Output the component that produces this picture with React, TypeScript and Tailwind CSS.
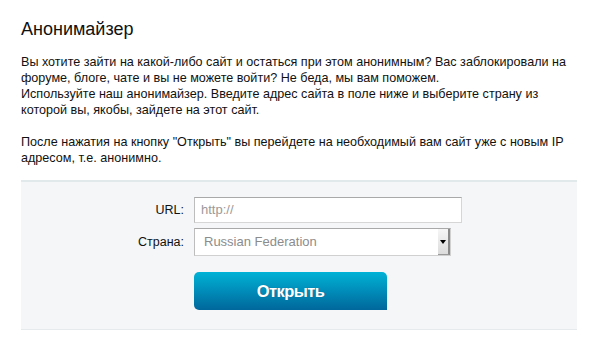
import React from "react";

export default function App() {
  return (
    <div className="w-[600px] h-[357px] bg-white text-[#111] font-['Liberation_Sans',Arial,sans-serif] overflow-hidden">
      <div className="px-[21px] pt-[18px]">
        <h1 className="text-[18px] leading-[22px] font-normal">Анонимайзер</h1>
        <p className="mt-[14px] text-[12.6px] leading-[16px] whitespace-nowrap">
          Вы хотите зайти на какой-либо сайт и остаться при этом анонимным? Вас заблокировали на
          <br />
          форуме, блоге, чате и вы не можете войти? Не беда, мы вам поможем.
          <br />
          Используйте наш анонимайзер. Введите адрес сайта в поле ниже и выберите страну из
          <br />
          которой вы, якобы, зайдете на этот сайт.
          <br />
          <br />
          После нажатия на кнопку "Открыть" вы перейдете на необходимый вам сайт уже с новым IP
          <br />
          адресом, т.е. анонимно.
        </p>
      </div>
      <div className="mx-[21px] mt-[14px] w-[556px] h-[150px] bg-[#f4f6f8] border-t-2 border-t-[#e1e9eb] border-b border-b-[#e6eaec] pt-[15px]">
        <div className="grid grid-cols-[163px_auto] gap-x-[10px] items-center">
          <label className="text-right text-[12.5px] leading-[16px]">URL:</label>
          <div className="w-[268px] h-[26px] bg-white border border-[#d6d6d6] border-t-[#a9a9a9] border-l-[#bdbdbd] flex items-center pl-[6px] text-[13px] text-[#9a9a9a]">
            http://
          </div>
          <label className="mt-[5px] text-right text-[12.5px] leading-[16px]">Страна:</label>
          <div className="mt-[5px] w-[257px] h-[28px] bg-white border border-[#d0d0d0] border-t-[#a9a9a9] border-l-[#bdbdbd] flex items-center justify-between text-[13px] text-[#8c8c8c]">
            <span className="pl-[9px]">Russian Federation</span>
            <div className="w-[12px] h-full bg-gradient-to-b from-[#f6f6f6] to-[#dcdcdc] border-r-2 border-b border-r-[#8a8a8a] border-b-[#9a9a9a] flex items-center justify-center">
              <svg width="6" height="4" viewBox="0 0 6 4">
                <path d="M0 0 H6 L3 4 Z" fill="#000" />
              </svg>
            </div>
          </div>
          <div />
          <button className="mt-[16px] w-[193px] h-[38px] rounded-[5px] rounded-br-none bg-gradient-to-b from-[#00b3d6] to-[#00679b] text-white text-[16.5px] font-bold tracking-[-0.6px] [text-shadow:0_0_1px_rgba(0,40,80,0.4)]">
            Открыть
          </button>
        </div>
      </div>
    </div>
  );
}
